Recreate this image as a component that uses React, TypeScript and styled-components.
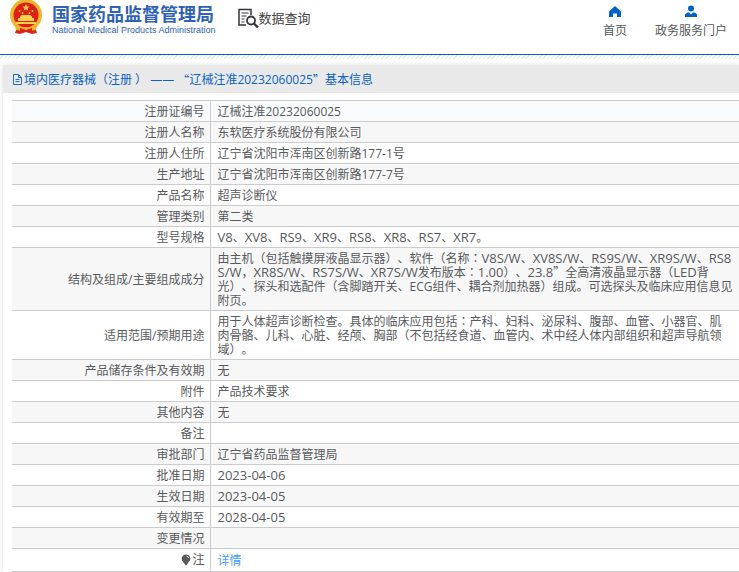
import React from "react";
import styled, { createGlobalStyle } from "styled-components";

const Global = createGlobalStyle`
  * { box-sizing: border-box; }
  body {
    margin: 0;
    background: #fff;
    color: #585a5e;
    font-family: "Open Sans", "Noto Sans CJK SC", sans-serif;
    font-size: 12px;
    line-height: 14px;
    text-spacing-trim: space-all;
    overflow-x: hidden;
  }
`;

const Header = styled.header`
  display: flex;
  align-items: flex-start;
  height: 55px;
  padding: 0 12px 0 9px;
  border-bottom: 1px solid #0062c8;
`;

const Brand = styled.a`
  display: flex;
  gap: 9px;
  color: #2f62b5;
  text-decoration: none;
`;

const BrandText = styled.span`
  display: flex;
  flex-direction: column;
  padding-top: 2px;
  white-space: nowrap;
`;

const BrandName = styled.strong`
  font-family: "Noto Sans CJK SC", sans-serif;
  font-size: 18px;
  line-height: 22px;
`;

const BrandSub = styled.span`
  font-family: "Liberation Sans", sans-serif;
  font-size: 9px;
  line-height: 12px;
`;

const Section = styled.div`
  display: flex;
  align-items: center;
  height: 36px;
  margin-left: 22px;
  color: #444;
  font-size: 13px;
  white-space: nowrap;
`;

const Nav = styled.nav`
  display: flex;
  gap: 28px;
  margin-left: auto;
`;

const NavLink = styled.a`
  display: flex;
  flex-direction: column;
  align-items: center;
  gap: 4px;
  padding-top: 5px;
  color: #585a5e;
  line-height: 16px;
  text-decoration: none;
`;

const Hatch = styled.div`
  height: 4px;
  background: repeating-linear-gradient(135deg, #fff 0 2px, #ececec 2px 3px);
`;

const Panel = styled.main`
  margin: 6px 0 0 3px;
  background: #fff;
  box-shadow: 0 0 5px #ddd;
`;

const Title = styled.h1`
  display: flex;
  align-items: center;
  height: 28px;
  margin: 0;
  padding: 2px 0 0 9px;
  background: #e9e9e9;
  color: #0a62c4;
  font-size: 12px;
  font-weight: 400;
  white-space: pre;
`;

const Wide = styled.span`
  font-family: "Noto Sans CJK SC", sans-serif;
  line-height: 0;
`;

const Centered = styled.span`
  font-family: "Noto Sans CJK TC", sans-serif;
  line-height: 0;
`;

const Latin = styled.span`
  font-size: 13px;
  line-height: 0;
`;

const TableWrap = styled.div`
  padding: 7px 0 0 9px;
`;

const Table = styled.table`
  width: 100%;
  border-collapse: collapse;
  table-layout: fixed;
`;

const Row = styled.tr`
  background: #fff;
  &:nth-child(even) { background: #f7f7f7; }
  &:first-child { background: #f9fafc; }
`;

const Label = styled.th`
  width: 198px;
  padding: 4px 5px 2px;
  border: solid #ccc;
  border-width: 1px 1px 1px 0;
  font-weight: 400;
  text-align: right;
`;

const Value = styled.td`
  padding: 4px 6px 2px 7px;
  border: solid #ccc;
  border-width: 1px 0;
  word-break: break-all;
`;

const Detail = styled.a`
  color: #409eff;
  line-height: 16px;
  text-decoration: none;
`;

const Note = styled.span`
  display: inline-flex;
  align-items: center;
  gap: 1px;
`;

const Emblem = () => (
  <svg width="34" height="35" viewBox="0 0 34 35" aria-hidden="true">
    <path d="M8 27h18l2 6-5 1-6-2-6 2-5-1z" fill="#d8251c" />
    <circle cx="17" cy="15" r="16" fill="#eeb62c" />
    <circle cx="17" cy="15" r="12.500" fill="#de1f18" />
    <path d="M17 4l1 2.500h2.600l-2 1.700.7 2.600L17 9.300l-2.300 1.500.7-2.600-2-1.700H16z" fill="#fbd34b" />
    <g fill="#fbd34b">
      <circle cx="10.500" cy="11" r="1" /><circle cx="13.500" cy="13" r="1" />
      <circle cx="20.500" cy="13" r="1" /><circle cx="23.500" cy="11" r="1" />
      <path d="M11 16.500l2-1.500h8l2 1.500v1.500h2v3H9v-3h2zM6.500 22h21l-1 2h-19z" />
    </g>
    <path d="M6 26q5 4 11 1 6 3 11-1l-1 4-6 1-4-2-4 2-6-1z" fill="#eeb62c" />
    <path d="M11 28l6 2 6-2v5l-6-1.500L11 33z" fill="#d8251c" />
  </svg>
);

const SearchDoc = () => (
  <svg width="21" height="20" viewBox="0 0 21 20" fill="none" stroke="#33333d" aria-hidden="true">
    <path d="M8 17H1V1.500h12V7" strokeWidth="1.500" />
    <path d="M3.500 5h7M3.500 8h5M3.500 11h3M3.500 14h3" strokeWidth="1.100" />
    <circle cx="13" cy="12.500" r="4" strokeWidth="1.800" />
    <path d="M16 15.500l4 4" strokeWidth="2.400" />
  </svg>
);

const Home = () => (
  <svg width="14" height="14" viewBox="0 0 14 14" fill="#0062c8" aria-hidden="true">
    <path d="M7 1L1 6.500V12h4V8.500h4V12h4V6.500z" />
  </svg>
);

const Person = () => (
  <svg width="14" height="14" viewBox="0 0 14 14" fill="#0062c8" aria-hidden="true">
    <circle cx="7" cy="3.500" r="3" />
    <path d="M1 12V9.500q1-1.800 4-2.200l2 2.200 2-2.200q3 .4 4 2.200V12z" />
  </svg>
);

const Doc = () => (
  <svg width="12" height="12" viewBox="0 0 12 12" fill="none" stroke="#0a62c4" aria-hidden="true">
    <path d="M1.500 .5h5l3 3v7h-8zM6.500 .5v3h3M3.500 5.500h4M3.500 7.500h4" strokeWidth=".9" />
  </svg>
);

const Bulb = () => (
  <svg width="10" height="12" viewBox="0 0 10 12" aria-hidden="true">
    <path d="M5 .5a4.300 4.300 0 0 1 2.500 7.800L6 10.500 5 11.500 4 10.500 2.500 8.300A4.300 4.300 0 0 1 5 .5z" fill="#585a5e" />
    <path d="M5.500 2q1.800.3 2 2" fill="none" stroke="#fff" strokeWidth=".8" />
  </svg>
);

const typeset = (text: string) =>
  text.split(/([：”]|[A-Z0-9/.-]*\d[A-Z0-9/.-]*|S\/W|LED)/).map((part, i) => {
    if (i % 2 === 0) return part;
    if (part === "”") return <Wide key={i}>{part}</Wide>;
    if (part === "：") return <Centered key={i}>{part}</Centered>;
    return <Latin key={i}>{part}</Latin>;
  });

const rows: [string, React.ReactNode][] = [
  ["注册证编号", "辽械注准20232060025"],
  ["注册人名称", "东软医疗系统股份有限公司"],
  ["注册人住所", "辽宁省沈阳市浑南区创新路177-1号"],
  ["生产地址", "辽宁省沈阳市浑南区创新路177-7号"],
  ["产品名称", "超声诊断仪"],
  ["管理类别", "第二类"],
  ["型号规格", typeset("V8、XV8、RS9、XR9、RS8、XR8、RS7、XR7。")],
  ["结构及组成/主要组成成分", typeset("由主机（包括触摸屏液晶显示器）、软件（名称：V8S/W、XV8S/W、RS9S/W、XR9S/W、RS8S/W，XR8S/W、RS7S/W、XR7S/W发布版本：1.00）、23.8”全高清液晶显示器（LED背光）、探头和选配件（含脚踏开关、ECG组件、耦合剂加热器）组成。可选探头及临床应用信息见附页。")],
  ["适用范围/预期用途", typeset("用于人体超声诊断检查。具体的临床应用包括：产科、妇科、泌尿科、腹部、血管、小器官、肌肉骨骼、儿科、心脏、经颅、胸部（不包括经食道、血管内、术中经人体内部组织和超声导航领域）。")],
  ["产品储存条件及有效期", "无"],
  ["附件", "产品技术要求"],
  ["其他内容", "无"],
  ["备注", ""],
  ["审批部门", "辽宁省药品监督管理局"],
  ["批准日期", typeset("2023-04-06")],
  ["生效日期", typeset("2023-04-05")],
  ["有效期至", typeset("2028-04-05")],
  ["变更情况", ""],
];

export default function App() {
  return (
    <>
      <Global />
      <Header>
        <Brand href="#">
          <Emblem />
          <BrandText>
            <BrandName>国家药品监督管理局</BrandName>
            <BrandSub>National Medical Products Administration</BrandSub>
          </BrandText>
        </Brand>
        <Section><SearchDoc />数据查询</Section>
        <Nav>
          <NavLink href="#"><Home />首页</NavLink>
          <NavLink href="#"><Person />政务服务门户</NavLink>
        </Nav>
      </Header>
      <Hatch />
      <Panel>
        <Title>
          <Doc />境内医疗器械（注册 ） —— <Wide>“</Wide>辽械注准20232060025<Wide>”</Wide>基本信息
        </Title>
        <TableWrap>
          <Table>
            <tbody>
              {rows.map(([label, value]) => (
                <Row key={label}>
                  <Label scope="row">{label}</Label>
                  <Value>{value}</Value>
                </Row>
              ))}
              <Row>
                <Label scope="row"><Note><Bulb />注</Note></Label>
                <Value><Detail href="#">详情</Detail></Value>
              </Row>
            </tbody>
          </Table>
        </TableWrap>
      </Panel>
    </>
  );
}
